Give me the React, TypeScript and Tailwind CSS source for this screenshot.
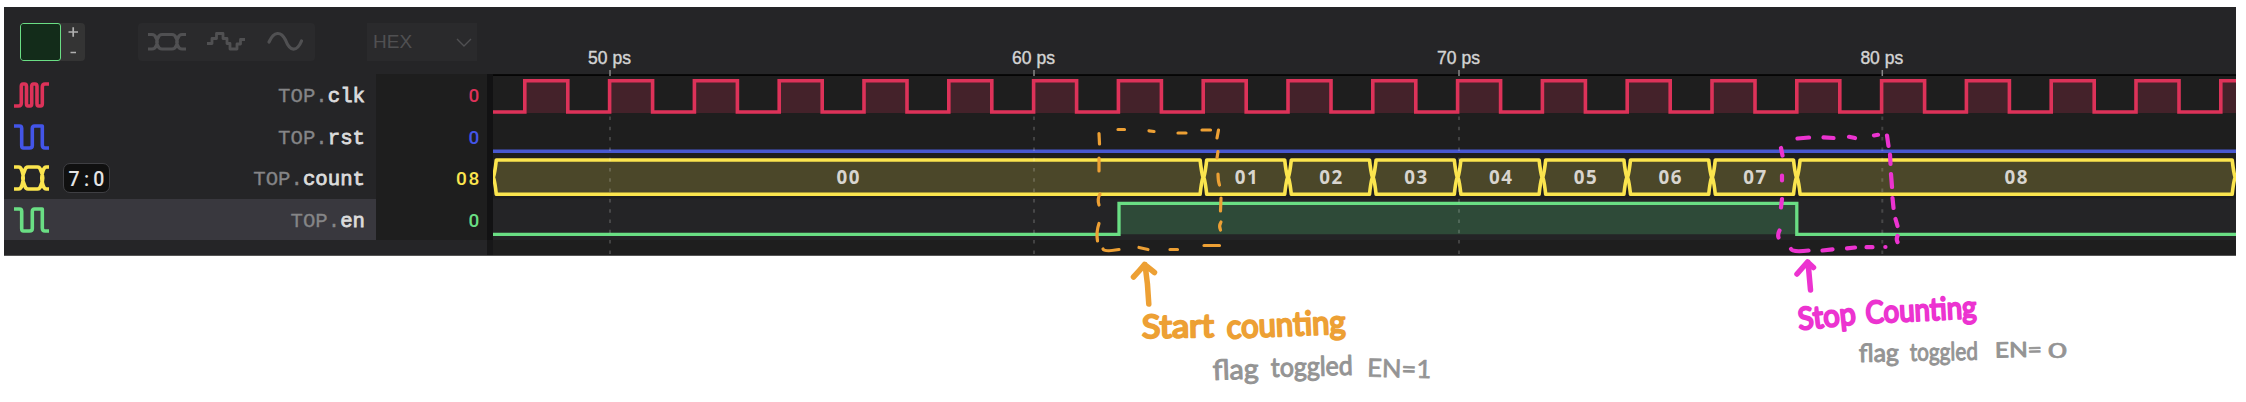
import React from 'react';

const RED = '#dd3259';
const BLUE = '#4355e8';
const YELLOW = '#fbe54e';
const GREEN = '#6ade84';

const FIRST_RISE = 524.8;
const PERIOD = 84.8;

function clockPath() {
  let d = 'M493 112';
  for (let i = 0; i <= 20; i++) {
    const x = FIRST_RISE + i * PERIOD;
    d += ` H${x.toFixed(1)} V80.8 H${(x + 43).toFixed(1)} V112`;
  }
  return d;
}

const busEdges = [493, 1203.4, 1288, 1372.8, 1457.6, 1542.4, 1627.2, 1712, 1796.8, 2235.5];
const busSegments = busEdges.slice(0, -1).map((start, i) => ({
  start,
  end: busEdges[i + 1],
  label: `0${i}`,
  at: i === 0 ? 848 : i === 8 ? 2016 : (start + busEdges[i + 1]) / 2 + 0.5,
}));

const ticks = [
  { x: 610, label: '50 ps' },
  { x: 1034, label: '60 ps' },
  { x: 1459, label: '70 ps' },
  { x: 1882.3, label: '80 ps' },
];

function Icon({ d, color }: { d: string; color: string }) {
  return (
    <svg width="35" height="27" viewBox="0 0 35 27" fill="none" stroke={color} strokeWidth="3.600" strokeLinejoin="round">
      <path d={d} />
    </svg>
  );
}

const CLOCK_ICON =
  'M0 25H4.500Q7.300 25 7.300 22V5.500Q7.300 3 9 3H10.500Q12.500 3 12.500 5.500V22.500Q12.500 25 14 25H16Q17.700 25 17.700 22.500V5.500Q17.700 3 19.500 3H21Q23 3 23 5.500V22.500Q23 25 24.500 25H26.500Q28.300 25 28.300 22.500V6Q28.300 3 31 3H35';
const PULSE_ICON =
  'M0 3H5.500Q7.700 3 7.700 5.500V22.500Q7.700 25 9.500 25H15.500Q18.300 25 18.300 22.500V5.500Q18.300 3 20.500 3H28.300V22Q28.300 25 31 25H35';
const BUS_ICON =
  'M0 3H4.500Q7 3 8 7Q10.500 14 8 21Q7 25 4.500 25H0M35 3H32.500Q30 3 29 7Q26.500 14 29 21Q30 25 32.500 25H35M14 3H23.500Q26 3 27 7Q30.500 14 27 21Q26 25 23.500 25H14Q11.500 25 10.500 21Q7 14 10.500 7Q11.500 3 14 3Z';

const signals = [
  { name: 'clk', value: '0', color: RED, icon: CLOCK_ICON, range: '', selected: false },
  { name: 'rst', value: '0', color: BLUE, icon: PULSE_ICON, range: '', selected: false },
  { name: 'count', value: '08', color: YELLOW, icon: BUS_ICON, range: '7:0', selected: false },
  { name: 'en', value: '0', color: GREEN, icon: PULSE_ICON, range: '', selected: true },
];

function Digits({ text }: { text: string }) {
  return (
    <span className="flex font-['Roboto',sans-serif] font-medium">
      {text.split('').map((c, i) => (
        <span key={i} className="w-[12.4px] text-center">
          {c}
        </span>
      ))}
    </span>
  );
}

function Toolbar() {
  return (
    <div className="flex h-[67px] w-[489px] items-start bg-[#252527] pt-4 pl-4">
      <div className="flex h-[38px] w-[65px] overflow-hidden rounded bg-[#343434]">
        <div className="h-[38px] w-[41px] rounded-[3px] border-[1.5px] border-[#6ade84] bg-[#132c1a]" />
        <svg width="24" height="38" stroke="#b0b0b0" strokeWidth="1.700">
          <path d="M7.500 9H17M12.200 4.300V13.700M9.500 29.500H15" />
        </svg>
      </div>
      <div className="ml-[53px] flex h-[38px] w-[177px] items-center rounded bg-[#2a2a2c]">
        <svg width="177" height="38" fill="none" stroke="#505052" strokeWidth="3.200" strokeLinejoin="round">
          <path d="M10 11.500H14Q17 11.500 18 15Q20.500 19 18 23Q17 26 14 26H10M48 11.500H44Q41 11.500 40 15Q37.500 19 40 23Q41 26 44 26H48M24 11.500H34Q37 11.500 38 15Q40.500 19 38 23Q37 26 34 26H24Q21 26 20 23Q17.500 19 20 15Q21 11.500 24 11.500Z" />
          <path strokeWidth="2.800" d="M69 20.500H74V15.500H78.500V10.500H85V15.500H89V20.500H92V26H99V21H102.500V16.500H107" />
          <path strokeWidth="3.200" strokeLinecap="round" d="M131 19C136 8 143 8 147.500 17C152 29 159 29 163.500 18" />
        </svg>
      </div>
      <div className="ml-[52px] flex h-[38px] w-[110px] items-center justify-between bg-[#2a2a2c] pt-px pr-[5px] pl-[6px] font-['Liberation_Sans',sans-serif] text-[19px] text-[#505052]">
        HEX
        <svg width="16" height="10" fill="none" stroke="#505052" strokeWidth="1.400">
          <path d="M1 1L8 8L15 1" />
        </svg>
      </div>
    </div>
  );
}

function SignalList() {
  return (
    <div className="flex">
      <div className="w-[372px]">
        {signals.map((s) => (
          <div
            key={s.name}
            className={`flex h-[41.5px] items-center pr-[11px] pl-[10px] ${s.selected ? 'bg-[#39383e]' : 'bg-[#252527]'}`}
          >
            <Icon d={s.icon} color={s.color} />
            {s.range && (
              <div className="mt-px ml-[14px] flex h-[30px] w-[47px] items-center justify-center rounded-[7px] border-[1.500px] border-[#3f3f43] bg-[#101010] pt-[2px] text-[19.500px] text-[#e3e3e3]">
                <Digits text={s.range} />
              </div>
            )}
            <div className="ml-auto pt-[4px] font-['Liberation_Mono',monospace] text-[20.700px] text-[#858587] [-webkit-text-stroke:0.300px]">
              TOP.<span className="text-[#dcdcdc] [-webkit-text-stroke:0.800px]">{s.name}</span>
            </div>
          </div>
        ))}
      </div>
      <div className="w-[111px] bg-[#1e1e1e]">
        {signals.map((s) => (
          <div key={s.name} className="flex h-[41.500px] items-center justify-end pt-[3px] pr-[7px] text-[19px]" style={{ color: s.color }}>
            <Digits text={s.value} />
          </div>
        ))}
      </div>
      <div className="w-[6px] bg-[#121213]" />
    </div>
  );
}

function Waves() {
  return (
    <svg width="1743" height="249" viewBox="493 7 1743 249" className="shrink-0">
      <rect x="493" y="7" width="1743" height="67" fill="#252527" />
      <rect x="493" y="74" width="1743" height="182" fill="#1e1e1e" />
      <rect x="493" y="198.500" width="1743" height="41.500" fill="#242426" />
      <rect x="493" y="74.300" width="1743" height="1.500" fill="#000" />
      {ticks.map((t) => (
        <g key={t.x}>
          <path d={`M${t.x} 70V76`} stroke="#888" strokeWidth="1.500" />
          <text x={t.x - 0.5} y="63.500" textAnchor="middle" fill="#d4d4d4" stroke="#d4d4d4" strokeWidth="0.400" fontSize="17.500" fontFamily="Liberation Sans, sans-serif">
            {t.label}
          </text>
        </g>
      ))}
      <path d={`${clockPath()} V113 H493Z`} fill={RED} fillOpacity="0.200" />
      <path d={clockPath()} fill="none" stroke={RED} strokeWidth="3.600" />
      <path d="M493 151.300H2236" stroke="#4858d0" strokeWidth="3.600" />
      {busSegments.map((b) => (
        <g key={b.label}>
          <path
            d={`M${b.start + 3.3} 160H${b.end - 3.3}Q${b.end - 2} 172 ${b.end - 0.4} 177.200Q${b.end - 2} 182 ${b.end - 3.3} 194.300H${b.start + 3.3}Q${b.start + 2} 182 ${b.start + 0.4} 177.200Q${b.start + 2} 172 ${b.start + 3.3} 160Z`}
            fill="#4b4729"
            stroke={YELLOW}
            strokeWidth="3.600"
            strokeLinejoin="round"
          />
          <text x={b.at + 0.7} y="184" textAnchor="middle" fill="#d8d5cf" fontSize="18.800" fontWeight="700" letterSpacing="1.500" fontFamily="Noto Sans, sans-serif">
            {b.label}
          </text>
        </g>
      ))}
      <path d="M1119 203.300H1796.800V234.300H1119Z" fill="#2e4a38" />
      <path d="M493 234.300H1119V203.300H1796.800V234.300H2236" fill="none" stroke={GREEN} strokeWidth="3.300" />
      {ticks.map((t) => (
        <path key={t.x} d={`M${t.x} 116.500V256`} stroke="#fff" strokeOpacity="0.160" strokeWidth="2" strokeDasharray="3.500 6.800" />
      ))}
      <rect x="493" y="255" width="1743" height="1" fill="#555" />
    </svg>
  );
}

function Hand({
  x, y, w, size, turn, color, pen, children,
}: {
  x: number; y: number; w: number; size: number; turn: number; color: string; pen: number; children: string;
}) {
  return (
    <text
      x={x}
      y={y}
      textLength={w}
      lengthAdjust="spacingAndGlyphs"
      fontFamily="Lato, sans-serif"
      fontSize={size}
      transform={`rotate(${turn} ${x} ${y})`}
      fill={color}
      stroke={color}
      strokeWidth={pen}
    >
      {children}
    </text>
  );
}

const ORANGE = '#eda034';
const PINK = '#ec33d0';
const GRAY = '#949494';

function Notes() {
  return (
    <svg className="absolute top-0 left-0" width="2246" height="402" fill="none" strokeLinecap="round" strokeLinejoin="round">
      <g stroke={ORANGE} strokeWidth="3.200">
        <path d="M1099 133.500L1099.500 144M1099 158V171M1100 194Q1097 199 1099 205M1099 223.500Q1096 232 1097.500 241M1103 249Q1104 252 1119 249.500M1139 247.500L1148 249.500M1170 249.500H1177.500M1204 245.500H1219.500M1118 129.500H1124.500M1149 130.800L1154 131.500M1178 133H1186M1202 130H1210.500M1218.500 130L1217 138M1218 151.500L1217 158M1218 174Q1218 181 1219.500 185M1221 198L1220.500 211M1221 222Q1218.500 226 1220.500 230" />
        <path strokeWidth="5.500" d="M1148.800 304Q1148 284 1145 264.500M1133.500 277Q1141 269 1144.500 264.500Q1149 268 1154.500 272.500" />
      </g>
      <g stroke={PINK} strokeWidth="4.200">
        <path d="M1781 148L1782.500 155.500M1782 175.500V180.500M1782 199L1781 207.500M1779.500 230.500Q1777.500 234 1778.500 237.500M1791 249Q1792 252.500 1808.500 250.500M1822.500 250.500L1832.500 249.300M1847 248.300L1855 247.500M1866.500 247.200H1872.500M1885.300 247H1885.500M1797.500 138.500L1809 137.500M1823.500 137.300L1833.500 138M1849 136.800L1855 138M1874 135.500L1878 134.800M1887 135.500L1888.500 146M1890 154.500L1890.500 164M1891 174L1892 187M1892.500 198L1893.500 208M1895.500 219L1897.500 226M1897.500 236Q1896 239 1897.500 242" />
        <path strokeWidth="5.500" d="M1810.500 290L1808 262M1797 274L1807.500 262L1813.500 267.500" />
      </g>
      <Hand x={1142} y={338} w={72} size={32} turn={-1} color={ORANGE} pen={2.2}>Start</Hand>
      <Hand x={1227} y={338.500} w={119} size={33} turn={-2.5} color={ORANGE} pen={2.2}>counting</Hand>
      <Hand x={1213} y={380} w={46} size={28} turn={-2} color={GRAY} pen={1}>flag</Hand>
      <Hand x={1271} y={377} w={82} size={27} turn={-1.500} color={GRAY} pen={1}>toggled</Hand>
      <Hand x={1367} y={376.500} w={64} size={25} turn={1.500} color={GRAY} pen={0.700}>EN=1</Hand>
      <Hand x={1799} y={330} w={58} size={31} turn={-6} color={PINK} pen={2.200}>Stop</Hand>
      <Hand x={1866} y={323.500} w={111} size={31} turn={-3} color={PINK} pen={2.200}>Counting</Hand>
      <Hand x={1859} y={362} w={40} size={25} turn={-1} color={GRAY} pen={1}>flag</Hand>
      <Hand x={1910} y={361} w={68} size={25} turn={-1} color={GRAY} pen={1}>toggled</Hand>
      <Hand x={1995} y={357.500} w={47} size={21} turn={-1} color={GRAY} pen={0.900}>EN=</Hand>
      <Hand x={2048} y={358} w={19} size={22} turn={0} color={GRAY} pen={0.600}>0</Hand>
    </svg>
  );
}

export default function App() {
  return (
    <div className="relative h-[402px] w-[2246px] overflow-hidden bg-white pt-[7px] pl-1">
      <div className="flex h-[249px] w-[2232px] bg-[#252527]">
        <div className="flex w-[489px] shrink-0 flex-col">
          <Toolbar />
          <SignalList />
          <div className="flex flex-1 justify-end border-b border-[#555]">
            <div className="w-[6px] bg-[#171718]" />
          </div>
        </div>
        <Waves />
      </div>
      <Notes />
    </div>
  );
}
